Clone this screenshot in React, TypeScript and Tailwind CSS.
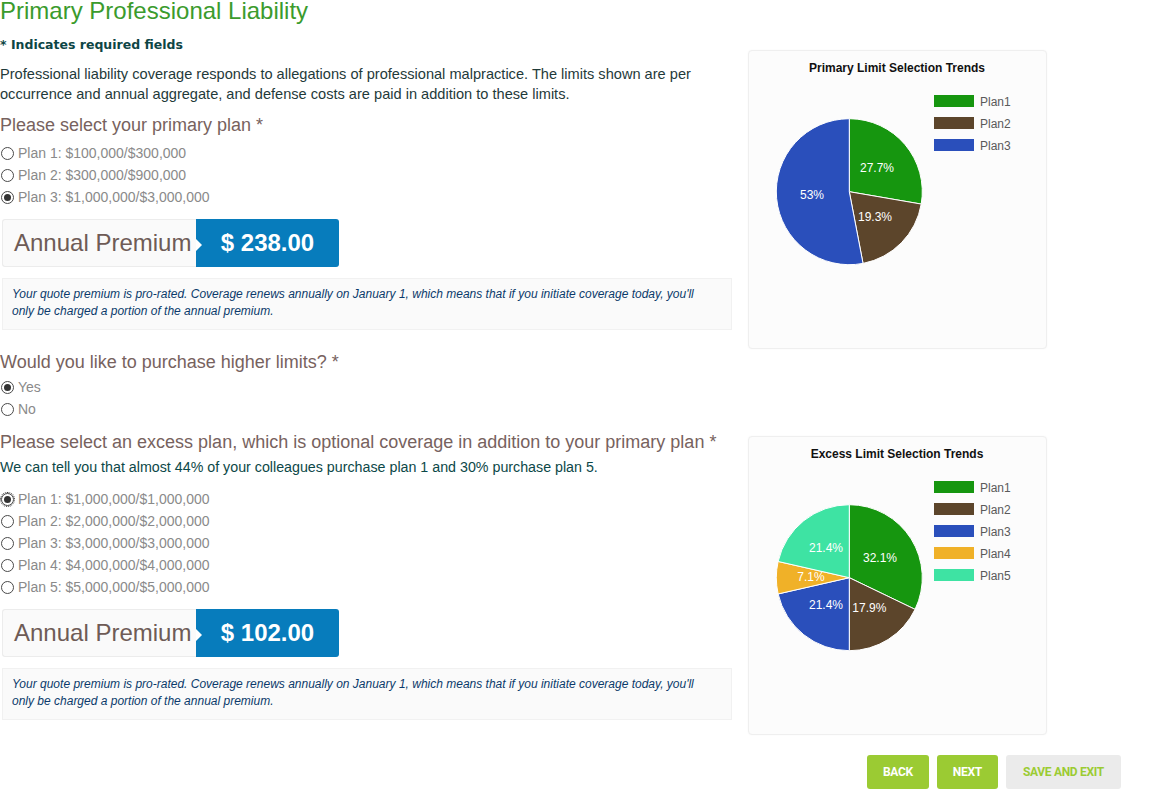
const primaryPlans = [
  'Plan 1: $100,000/$300,000',
  'Plan 2: $300,000/$900,000',
  'Plan 3: $1,000,000/$3,000,000',
]

const excessPlans = [
  'Plan 1: $1,000,000/$1,000,000',
  'Plan 2: $2,000,000/$2,000,000',
  'Plan 3: $3,000,000/$3,000,000',
  'Plan 4: $4,000,000/$4,000,000',
  'Plan 5: $5,000,000/$5,000,000',
]

const green = '#16960f'
const brown = '#5c452b'
const blue = '#2a4fbb'
const yellow = '#f0b128'
const teal = '#3ee3a3'

type Slice = { name: string; value: number; color: string; label: string; lx: number; ly: number }

const primarySlices: Slice[] = [
  { name: 'Plan1', value: 23, color: green, label: '27.7%', lx: 128, ly: 116.7 },
  { name: 'Plan2', value: 16, color: brown, label: '19.3%', lx: 126, ly: 166 },
  { name: 'Plan3', value: 44, color: blue, label: '53%', lx: 63, ly: 144 },
]

const excessSlices: Slice[] = [
  { name: 'Plan1', value: 9, color: green, label: '32.1%', lx: 131, ly: 120.7 },
  { name: 'Plan2', value: 5, color: brown, label: '17.9%', lx: 120.3, ly: 170.7 },
  { name: 'Plan3', value: 6, color: blue, label: '21.4%', lx: 77, ly: 168 },
  { name: 'Plan4', value: 2, color: yellow, label: '7.1%', lx: 62, ly: 139.7 },
  { name: 'Plan5', value: 6, color: teal, label: '21.4%', lx: 77, ly: 110.7 },
]

function Radio({ checked, focus }: { checked?: boolean; focus?: boolean }) {
  return (
    <span
      className={
        'ml-[1px] mr-[4px] flex h-[13px] w-[13px] shrink-0 items-center justify-center rounded-full border border-[#4a4a4a] bg-white ' +
        (focus ? 'outline-1 outline-dotted outline-[#333]' : '')
      }
    >
      {checked && <span className="h-[7px] w-[7px] rounded-full bg-[#333]" />}
    </span>
  )
}

function RadioRow({ label, checked, focus }: { label: string; checked?: boolean; focus?: boolean }) {
  return (
    <label className="flex h-[22px] items-center text-[14px] text-[#8a8a8a]">
      <Radio checked={checked} focus={focus} />
      <span>{label}</span>
    </label>
  )
}

function Premium({ amount, className }: { amount: string; className: string }) {
  return (
    <div className={'ml-[2px] flex h-[48px] w-[337px] ' + className}>
      <div className="flex w-[194px] items-center rounded-l-[3px] border border-r-0 border-[#ececec] bg-[#fafafa] pl-[11px] text-[24px] text-[#6e5b56]">
        Annual Premium
      </div>
      <div className="relative flex flex-1 items-center justify-center rounded-r-[3px] bg-[#077cbc] text-[24px] font-bold text-white">
        <span className="absolute left-0 top-[20px] h-0 w-0 border-y-[6px] border-l-[6px] border-y-transparent border-l-white" />
        $ {amount}
      </div>
    </div>
  )
}

function Note({ className }: { className: string }) {
  return (
    <div
      className={
        'ml-[2px] w-[730px] border border-[#f1f1f1] bg-[#fafafa] pb-[9px] pl-[9px] pr-[22px] pt-[7px] text-[12px] italic leading-[17px] text-[#0b3a6b] ' +
        className
      }
    >
      Your quote premium is pro-rated. Coverage renews annually on January 1, which means that if you initiate coverage
      today, you'll only be charged a portion of the annual premium.
    </div>
  )
}

function arc(cx: number, cy: number, r: number, a0: number, a1: number) {
  const p = (a: number) => [cx + r * Math.sin(a), cy - r * Math.cos(a)]
  const [x0, y0] = p(a0)
  const [x1, y1] = p(a1)
  const large = a1 - a0 > Math.PI ? 1 : 0
  return `M${cx},${cy} L${x0},${y0} A${r},${r} 0 ${large} 1 ${x1},${y1} Z`
}

function PieCard({ title, slices, className }: { title: string; slices: Slice[]; className: string }) {
  const total = slices.reduce((s, x) => s + x.value, 0)
  const cx = 100.3
  const cy = 140.7
  const r = 73
  let a = 0
  return (
    <div
      className={
        'h-[299px] w-[299px] rounded-[4px] border border-[#efefef] bg-[#fcfcfc] shadow-[0_0_2px_rgba(0,0,0,0.04)] ' + className
      }
    >
      <svg width="297" height="297" className="block">
        <text x="148" y="21" textAnchor="middle" fontSize="12" fontWeight="bold" fill="#111" fontFamily="Liberation Sans, Arial, sans-serif">
          {title}
        </text>
        {slices.map((s) => {
          const a0 = a
          a += (s.value / total) * Math.PI * 2
          return <path key={s.name} d={arc(cx, cy, r, a0, a)} fill={s.color} stroke="#fff" strokeWidth="1" />
        })}
        {slices.map((s) => (
          <text
            key={s.name + 'l'}
            x={s.lx}
            y={s.ly + 4.3}
            textAnchor="middle"
            fontSize="12"
            fill="#fff"
            fontFamily="Liberation Sans, Arial, sans-serif"
          >
            {s.label}
          </text>
        ))}
        {slices.map((s, i) => (
          <g key={s.name + 'g'}>
            <rect x="185" y={44 + i * 22} width="40" height="12" fill={s.color} />
            <text x="231" y={54.5 + i * 22} fontSize="12" fill="#5a5a5a" fontFamily="Liberation Sans, Arial, sans-serif">
              {s.name}
            </text>
          </g>
        ))}
      </svg>
    </div>
  )
}

export default function App() {
  return (
    <div className="min-h-[805px] w-[1162px] bg-white font-['Liberation_Sans',Arial,sans-serif]">
      <h1 className="text-[24px] leading-[21px] text-[#3b9b2d]">Primary Professional Liability</h1>

      <div className="flex gap-[16px]">
        <div className="w-[732px]">
          <p className="mt-[15px] font-['DejaVu_Sans',sans-serif] text-[12.5px] font-bold leading-[18px] text-[#0d4545]">
            * Indicates required fields
          </p>
          <p className="mt-[10px] text-[14.6px] leading-[20px] text-[#1f3a3a]">
            Professional liability coverage responds to allegations of professional malpractice. The limits shown are per
            occurrence and annual aggregate, and defense costs are paid in addition to these limits.
          </p>
          <h2 className="mt-[11px] text-[18px] leading-[20px] text-[#77625e]">Please select your primary plan *</h2>
          <div className="mt-[7px]">
            {primaryPlans.map((p, i) => (
              <RadioRow key={p} label={p} checked={i === 2} />
            ))}
          </div>
          <Premium amount="238.00" className="mt-[11px]" />
          <Note className="mt-[11px]" />

          <h2 className="mt-[22px] text-[18px] leading-[20px] text-[#77625e]">Would you like to purchase higher limits? *</h2>
          <div className="mt-[4px]">
            <RadioRow label="Yes" checked />
            <RadioRow label="No" />
          </div>
        </div>
        <PieCard title="Primary Limit Selection Trends" slices={primarySlices} className="mt-[29px]" />
      </div>

      <div className="flex gap-[16px]">
        <div className="w-[732px]">
          <h2 className="mt-[12px] text-[18px] leading-[20px] text-[#77625e]">
            Please select an excess plan, which is optional coverage in addition to your primary plan *
          </h2>
          <p className="mt-[5px] text-[14.25px] leading-[20px] text-[#0c4848]">
            We can tell you that almost 44% of your colleagues purchase plan 1 and 30% purchase plan 5.
          </p>
          <div className="mt-[11px]">
            {excessPlans.map((p, i) => (
              <RadioRow key={p} label={p} checked={i === 0} focus={i === 0} />
            ))}
          </div>
          <Premium amount="102.00" className="mt-[11px]" />
          <Note className="mt-[11px]" />
        </div>
        <PieCard title="Excess Limit Selection Trends" slices={excessSlices} className="mt-[16px]" />
      </div>

      <div className="mt-[20px] flex w-[1121px] justify-end gap-[8px] font-['Roboto',sans-serif] text-[12px] font-bold tracking-[-0.3px]">
        <button className="h-[34px] rounded-[3px] bg-[#9bcb33] px-[16px] text-white">BACK</button>
        <button className="h-[34px] rounded-[3px] bg-[#9bcb33] px-[16px] text-white">NEXT</button>
        <button className="h-[34px] rounded-[3px] bg-[#ebebeb] px-[17px] text-[#9bcb33]">SAVE AND EXIT</button>
      </div>
    </div>
  )
}
